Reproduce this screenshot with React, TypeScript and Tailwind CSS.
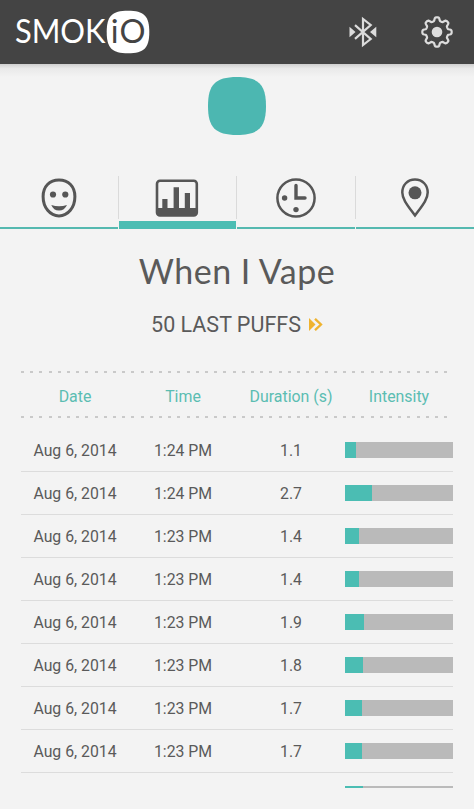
import React from "react";

const rows = [
  { time: "1:24 PM", duration: "1.1", level: 11 },
  { time: "1:24 PM", duration: "2.7", level: 27 },
  { time: "1:23 PM", duration: "1.4", level: 14 },
  { time: "1:23 PM", duration: "1.4", level: 14 },
  { time: "1:23 PM", duration: "1.9", level: 19 },
  { time: "1:23 PM", duration: "1.8", level: 18 },
  { time: "1:23 PM", duration: "1.7", level: 17 },
  { time: "1:23 PM", duration: "1.7", level: 17 },
];

function Logo() {
  return (
    <svg className="ml-3 h-[64px] w-[140px]" viewBox="12 0 140 64" fontFamily="Lato, sans-serif" fontSize="32.500" fill="#fff">
      <text x="15" y="43.300" textLength="90.500" lengthAdjust="spacingAndGlyphs">SMOK</text>
      <path d="M128 10.700C144 10.700 149.300 16 149.300 32S144 53.300 128 53.300S106.700 48 106.700 32S112 10.700 128 10.700Z" />
      <text x="110.800 119.500" y="43.300" fill="#444">iO</text>
    </svg>
  );
}

function BluetoothIcon() {
  return (
    <svg className="h-[32px] w-[28px]" viewBox="0 0 28 32" fill="none" stroke="#dcdcdc" strokeWidth="2.200">
      <path d="M6 9.200L21.700 23L14 29V3L21.700 9L6 22.800" />
      <path d="M.5 10.800L6.500 16L.5 21.200ZM27.300 10.800L21 16L27.300 21.200Z" fill="#dcdcdc" stroke="none" />
    </svg>
  );
}

const gearPath =
  Array.from({ length: 160 }, (_, i) => {
    const a = (i / 160) * Math.PI * 2;
    const r = 12.9 + 1.8 * Math.tanh(2.2 * Math.cos(8 * a));
    return `${i ? "L" : "M"}${(r * Math.cos(a)).toFixed(2)} ${(r * Math.sin(a)).toFixed(2)}`;
  }).join("") + "Z";

function GearIcon() {
  return (
    <svg className="h-[34px] w-[34px]" viewBox="-17 -17 34 34">
      <path d={gearPath} fill="none" stroke="#dcdcdc" strokeWidth="2.200" strokeLinejoin="round" />
      <circle r="5.300" fill="#dcdcdc" />
    </svg>
  );
}

function FaceIcon() {
  return (
    <svg className="h-[42px] w-[42px]" viewBox="0 0 42 42" fill="#565656">
      <path d="M21 3C30.500 3 36.900 9.500 36.900 19.500C36.900 30.500 30 38.900 21 38.900S5.100 30.500 5.100 19.500C5.100 9.500 11.500 3 21 3Z" fill="none" stroke="#565656" strokeWidth="3" />
      <circle cx="15" cy="17.500" r="3.100" />
      <circle cx="27.300" cy="17.500" r="3.100" />
      <path d="M13.300 28Q21 30.500 29 28Q26.500 33.500 21 33.500T13.300 28Z" />
    </svg>
  );
}

function ChartIcon() {
  return (
    <svg className="h-[42px] w-[44px]" viewBox="0 0 44 42" fill="#565656">
      <rect x="2" y="3.800" width="39.800" height="34.600" rx="3" fill="none" stroke="#565656" strokeWidth="2.600" />
      <path d="M2 31H7.300V22H12.500V31H18.600V10.300H24V31H29.800V16H35V31H42V36Q42 39 39 39H5Q2 39 2 36Z" />
    </svg>
  );
}

function ClockIcon() {
  return (
    <svg className="h-[42px] w-[42px]" viewBox="0 0 42 42" fill="#565656">
      <circle cx="21" cy="21" r="18.600" fill="none" stroke="#565656" strokeWidth="2.500" />
      <path d="M21 8.500V21H30" fill="none" stroke="#565656" strokeWidth="3.400" strokeLinecap="round" />
      <circle cx="9.600" cy="21" r="2.700" />
      <circle cx="21" cy="32.600" r="2.700" />
    </svg>
  );
}

function PinIcon() {
  return (
    <svg className="h-[42px] w-[42px]" viewBox="0 0 42 42">
      <path d="M21 2.500C28.600 2.500 33.700 8.200 33.700 15.500C33.700 22.500 28 29 21 38.500C14 29 8.300 22.500 8.300 15.500C8.300 8.200 13.400 2.500 21 2.500Z" fill="none" stroke="#565656" strokeWidth="2.500" />
      <circle cx="21" cy="15.800" r="6.500" fill="#565656" />
    </svg>
  );
}

function Tab({ active, last, children }: { active?: boolean; last?: boolean; children: React.ReactNode }) {
  return (
    <div className="flex flex-1 flex-col">
      <div className={last ? "flex h-[43px] items-center justify-center" : "flex h-[43px] items-center justify-center border-r border-[#dadada]"}>
        {children}
      </div>
      <div className={active ? "mr-px mt-[2px] h-2 bg-[#4bbdb3]" : last ? "mt-[8px] h-[1.500px] bg-[#55b9b0]" : "mr-px mt-[8px] h-[1.500px] bg-[#55b9b0]"} />
    </div>
  );
}

const dots = "mr-[4px] h-[2px] bg-[repeating-linear-gradient(90deg,#c9c9c9_0px,#c9c9c9_3px,transparent_3px,transparent_9.200px)]";

export default function App() {
  return (
    <div className="h-[809px] w-[474px] overflow-hidden bg-[#f3f3f3] font-[Roboto,sans-serif] text-[#5a5a5a]">
      <header className="flex h-[64px] items-center bg-[#444]">
        <Logo />
        <div className="ml-auto mr-5 flex items-center gap-[43px]">
          <BluetoothIcon />
          <GearIcon />
        </div>
      </header>
      <div className="h-[13px] bg-gradient-to-b from-[#cfcfcf] via-[#e9e9e9] via-35% to-[#f3f3f3]" />
      <div className="flex justify-center">
        <svg className="h-[58px] w-[58px]" viewBox="0 0 58 58">
          <path d="M29 0C51 0 58 8 58 29S51 58 29 58S0 50 0 29S7 0 29 0Z" fill="#4cb7b1" />
        </svg>
      </div>
      <nav className="mt-[41px] flex h-[53px]">
        <Tab><FaceIcon /></Tab>
        <Tab active><ChartIcon /></Tab>
        <Tab><ClockIcon /></Tab>
        <Tab last><PinIcon /></Tab>
      </nav>
      <h1 className="mt-[22px] text-center font-[Lato,sans-serif] text-[34px] leading-[40px] tracking-[0.500px]">When I Vape</h1>
      <div className="mt-[18px] flex h-[30px] items-center justify-center gap-2">
        <span className="pt-[2px] text-[21.500px]">50 LAST PUFFS</span>
        <svg className="h-[13px] w-[14px]" viewBox="0 0 14 13">
          <path d="M0 0L6.500 6.500L0 13Z" fill="#efb32f" />
          <path d="M6 .8L12 6.500L6 12.200" fill="none" stroke="#efb32f" strokeWidth="2.300" />
        </svg>
      </div>
      <section className="mx-[21px] mt-[32px]">
        <div className={dots} />
        <div className="grid h-[43px] grid-cols-4 items-center pt-[4px] text-center text-[15.900px] text-[#5bbdb2]">
          <span>Date</span>
          <span>Time</span>
          <span>Duration (s)</span>
          <span>Intensity</span>
        </div>
        <div className={dots} />
        <div className="mt-[11px]">
          {rows.map((row, i) => (
            <div key={i} className="grid h-[43px] grid-cols-4 items-center border-b border-[#dcdcdc] text-center text-[15.800px]">
              <span className="pt-[2px]">Aug 6, 2014</span>
              <span className="pt-[2px]">{row.time}</span>
              <span className="pt-[2px]">{row.duration}</span>
              <div className="h-4 bg-[#bababa]">
                <div className="h-full bg-[#4bbdb3]" style={{ width: `${row.level * 0.925}%` }} />
              </div>
            </div>
          ))}
          <div className="mt-[13px] grid grid-cols-4">
            <div className="col-start-4 h-[2px] bg-[#bababa]">
              <div className="h-full w-[17%] bg-[#4bbdb3]" />
            </div>
          </div>
        </div>
      </section>
    </div>
  );
}
